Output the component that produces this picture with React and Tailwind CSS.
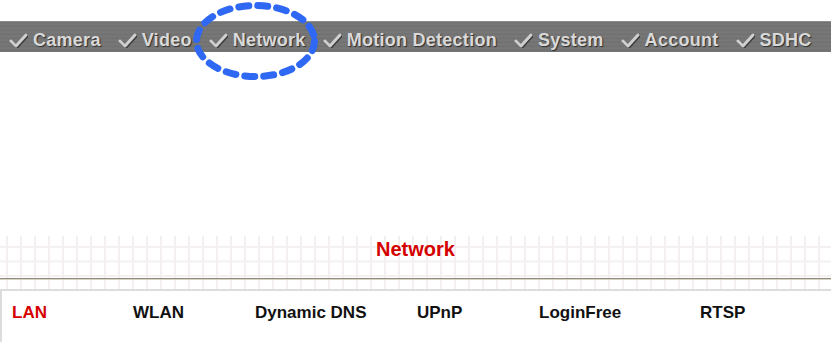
import React from 'react';

const menu = ["Camera", "Video", "Network", "Motion Detection", "System", "Account", "SDHC"];

const tabs = [
    { name: "LAN", width: "w-[121px]", active: true },
    { name: "WLAN", width: "w-[122px]" },
    { name: "Dynamic DNS", width: "w-[162px]" },
    { name: "UPnP", width: "w-[122px]" },
    { name: "LoginFree", width: "w-[161px]" },
    { name: "RTSP", width: "w-[100px]" },
];

const Check = () => (
    <svg width="20" height="16" viewBox="0 0 20 16" className="shrink-0">
        <path d="M3 9 L8 14 L18 3" fill="none" stroke="#3c3c3c" strokeWidth="3.2" strokeLinecap="round" strokeLinejoin="round" transform="translate(1 1)" />
        <path d="M3 9 L8 14 L18 3" fill="none" stroke="#cfcfcf" strokeWidth="3" strokeLinecap="round" strokeLinejoin="round" />
    </svg>
);

const App = () => {
    return (
        <div className="relative w-[831px] h-[342px] bg-white overflow-hidden font-['Liberation_Sans',Arial,sans-serif]">
            <div className="h-[21px]"></div>
            <div className="h-[31px] border-t border-[#8e8e8e] bg-[repeating-linear-gradient(180deg,#777_0px,#6c6c6c_1px,#7f7f7f_2px,#707070_3px,#767676_4px)] flex items-center pl-[8px] gap-[16px]">
                {menu.map((item) => (
                    <div key={item} className="flex items-center gap-[5px] translate-y-[3px]">
                        <Check />
                        <span className="text-[18px] leading-[20px] tracking-[0.27px] font-bold text-[#d9d9d9] whitespace-nowrap [text-shadow:1px_1px_1px_#2e2e2e]">
                            {item}
                        </span>
                    </div>
                ))}
            </div>
            <div className="h-[184px]"></div>
            <div className="h-[53px] bg-[linear-gradient(90deg,#f4f0f0_2px,transparent_2px),linear-gradient(180deg,#f4f0f0_2px,transparent_2px)] bg-[size:14px_14.5px] bg-[position:6px_10px]">
                <div className="pt-[3px] text-center text-[20px] leading-[20px] font-bold text-[#d40000]">Network</div>
                <div className="mt-[19px] h-[1px] bg-[#8e8c82]"></div>
                <div className="h-[1px] bg-[#d9d3c0]"></div>
            </div>
            <div className="border-t-2 border-l-2 border-[#dcdcdc] h-[60px] pt-[10px] pl-[10px] flex">
                {tabs.map((tab) => (
                    <div key={tab.name} className={tab.width + " shrink-0"}>
                        <span className={"text-[17px] leading-[20px] font-bold whitespace-nowrap " + (tab.active ? "text-[#d40000]" : "text-[#111]")}>
                            {tab.name}
                        </span>
                    </div>
                ))}
            </div>
            <svg className="absolute left-[190px] top-0" width="132" height="86" viewBox="0 0 132 86">
                <ellipse cx="65.5" cy="41" rx="59" ry="35.5" fill="none" stroke="#2f68f2" strokeWidth="7" strokeDasharray="10 9" strokeLinecap="round" />
            </svg>
        </div>
    );
}

export default App;
